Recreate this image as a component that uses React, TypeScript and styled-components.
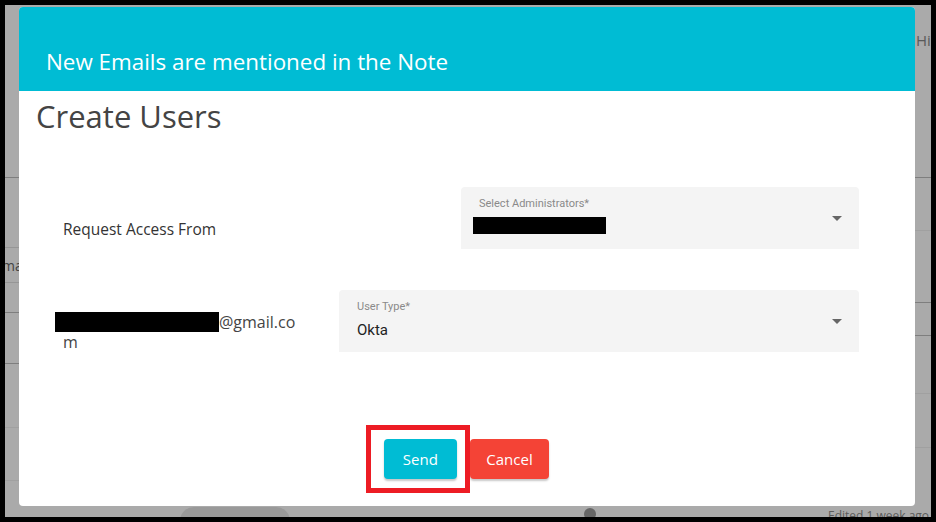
import React from "react";
import styled, { createGlobalStyle } from "styled-components";

const GlobalStyle = createGlobalStyle`
  html, body { margin: 0; padding: 0; background: #000; }
  body {
    width: 936px;
    height: 522px;
    overflow: hidden;
    font-family: "Open Sans", "Liberation Sans", sans-serif;
  }
  * { box-sizing: border-box; }
`;

const Frame = styled.div`
  position: relative;
  width: 936px;
  height: 522px;
  border: 5px solid #000;
  background: #fff;
  overflow: hidden;
`;

/* ---------- page underneath the modal ---------- */
const UnderPage = styled.div`
  display: flex;
  flex-direction: column;
  height: 100%;
`;

const UnderMain = styled.div`
  flex: 1;
  display: flex;
  min-height: 0;
`;

const SidePane = styled.div<{ $width: number }>`
  width: ${(p) => p.$width}px;
  display: flex;
  flex-direction: column;
  overflow: hidden;
`;

const Middle = styled.div`
  flex: 1;
`;

const UnderRow = styled.div<{ $h: number; $line: "dark" | "light" | "faint"; $padLeft?: number }>`
  flex: none;
  height: ${(p) => p.$h}px;
  border-bottom: 1px solid
    ${(p) => (p.$line === "dark" ? "#bdbdbd" : p.$line === "light" ? "#e2e2e2" : "#f0f0f0")};
  display: flex;
  align-items: center;
  padding-left: ${(p) => p.$padLeft ?? 0}px;
  white-space: nowrap;
  font-size: 14px;
  color: #5a5a5a;
`;

const TopRowText = styled.span`
  margin-top: -102px;
  font-size: 15px;
  color: #888;
`;

const ClippedText = styled.span`
  margin-left: -3px;
  font-size: 14px;
  color: #666;
`;

const UnderFooter = styled.div`
  flex: none;
  height: 10px;
  display: flex;
  align-items: flex-start;
  overflow: visible;
  white-space: nowrap;
`;

const Pill = styled.div`
  margin-left: 175px;
  width: 110px;
  height: 28px;
  border-radius: 14px;
  background: #e6e6e6;
  font-size: 12px;
  color: #333;
  padding: 6px 0 0 34px;
`;

const RoundIcon = styled.div`
  margin-left: 294px;
  margin-top: 1px;
  width: 12px;
  height: 12px;
  border-radius: 50%;
  background: #9a9a9a;
`;

const FooterNote = styled.div`
  margin-left: 232px;
  margin-top: 0px;
  font-size: 12px;
  color: #8a8a8a;
`;

/* ---------- modal ---------- */
const Backdrop = styled.div`
  position: absolute;
  inset: 0;
  background: rgba(0, 0, 0, 0.333);
  display: flex;
  padding: 2px 16px 11px 14px;
`;

const Modal = styled.div`
  flex: 1;
  display: flex;
  flex-direction: column;
  background: #fff;
  border-radius: 4px;
  overflow: hidden;
`;

const Header = styled.div`
  flex: none;
  height: 84px;
  background: #00bcd4;
  color: #fff;
  padding: 41px 27px 0;
  font-size: 22.4px;
  line-height: 28px;
`;

const Body = styled.div`
  flex: 1;
  display: flex;
  flex-direction: column;
  padding: 5px 56px 0 17px;
`;

const Title = styled.h2`
  margin: 0;
  font-weight: 400;
  font-size: 31px;
  line-height: 40px;
  color: #444;
`;

const Rows = styled.div`
  display: flex;
  flex-direction: column;
  gap: 41px;
  margin-top: 51px;
  padding-left: 19px;
`;

const FormRow = styled.div<{ $labelCol: number }>`
  display: grid;
  grid-template-columns: ${(p) => p.$labelCol}px 1fr;
  align-items: start;
`;

const RowLabel = styled.div`
  padding: 32px 0 0 8px;
  font-size: 15.5px;
  line-height: 20px;
  color: #333;
`;

const EmailLabel = styled.div`
  padding: 22px 40px 0 8px;
  font-size: 16px;
  line-height: 20px;
  color: #444;
  word-break: break-all;
`;

const Redacted = styled.span<{ $w: number; $h: number; $shift: number }>`
  display: inline-block;
  vertical-align: top;
  width: ${(p) => p.$w}px;
  height: ${(p) => p.$h}px;
  margin-left: -${(p) => p.$shift}px;
  background: #000;
`;

const Field = styled.div`
  height: 62px;
  background: #f4f4f4;
  border-radius: 4px 4px 0 0;
  display: flex;
  align-items: flex-start;
  padding: 10px 17px 0 18px;
  font-family: Roboto, "Liberation Sans", sans-serif;
`;

const FieldContent = styled.div`
  flex: 1;
  display: flex;
  flex-direction: column;
`;

const FieldLabel = styled.div`
  font-size: 11px;
  line-height: 14px;
  color: #8a8a8a;
`;

const FieldValue = styled.div`
  margin-top: 6px;
  font-size: 15px;
  line-height: 20px;
  color: #222;
  display: flex;
  align-items: center;
`;

const Caret = styled.span`
  margin-top: 19px;
  width: 0;
  height: 0;
  border-left: 5px solid transparent;
  border-right: 5px solid transparent;
  border-top: 5px solid #666;
`;

const ButtonRow = styled.div`
  display: flex;
  justify-content: center;
  gap: 13px;
  margin-top: 87px;
  margin-right: -38px;
`;

const Highlighted = styled.span`
  position: relative;
  display: inline-flex;
  &::after {
    content: "";
    position: absolute;
    top: -14px;
    bottom: -14px;
    left: -18px;
    right: -13px;
    border: 5px solid #ed1c24;
    pointer-events: none;
  }
`;

const Button = styled.button<{ $tone: "primary" | "danger" }>`
  height: 40px;
  min-width: 73px;
  padding: 0 16.5px;
  border: none;
  border-radius: 4px;
  font-family: "Open Sans", "Liberation Sans", sans-serif;
  font-size: 15px;
  color: #fff;
  background: ${(p) => (p.$tone === "primary" ? "#00bcd4" : "#f44336")};
  box-shadow: 0 2px 2px rgba(0, 0, 0, 0.22);
  cursor: pointer;
`;

const leftRows: { h: number; line: "dark" | "light" | "faint"; text?: string }[] = [
  { h: 173, line: "dark" },
  { h: 70, line: "light" },
  { h: 35, line: "light", text: "mail" },
  { h: 30, line: "dark" },
  { h: 51, line: "dark" },
  { h: 64, line: "faint" },
  { h: 53, line: "faint" },
];

const rightRows: { h: number; line: "dark" | "light" | "faint"; text?: string }[] = [
  { h: 173, line: "dark", text: "History" },
  { h: 53, line: "faint" },
  { h: 72, line: "dark" },
  { h: 33, line: "dark" },
  { h: 58, line: "faint" },
  { h: 54, line: "faint" },
];

export default function App() {
  return (
    <>
      <GlobalStyle />
      <Frame>
        <UnderPage>
          <UnderMain>
            <SidePane $width={200}>
              {leftRows.map((r, i) => (
                <UnderRow key={i} $h={r.h} $line={r.line}>
                  {r.text && <ClippedText>{r.text}</ClippedText>}
                </UnderRow>
              ))}
            </SidePane>
            <Middle />
            <SidePane $width={200}>
              {rightRows.map((r, i) => (
                <UnderRow key={i} $h={r.h} $line={r.line} $padLeft={185}>
                  {r.text && <TopRowText>{r.text}</TopRowText>}
                </UnderRow>
              ))}
            </SidePane>
          </UnderMain>
          <UnderFooter>
            <Pill>AWS Notes</Pill>
            <RoundIcon />
            <FooterNote>Edited 1 week ago</FooterNote>
          </UnderFooter>
        </UnderPage>

        <Backdrop>
          <Modal>
            <Header>New Emails are mentioned in the Note</Header>
            <Body>
              <Title>Create Users</Title>
              <Rows>
                <FormRow $labelCol={406}>
                  <RowLabel>Request Access From</RowLabel>
                  <Field>
                    <FieldContent>
                      <FieldLabel>Select Administrators*</FieldLabel>
                      <FieldValue>
                        <Redacted $w={133} $h={17} $shift={6} />
                      </FieldValue>
                    </FieldContent>
                    <Caret />
                  </Field>
                </FormRow>
                <FormRow $labelCol={284}>
                  <EmailLabel>
                    <Redacted $w={164} $h={20} $shift={8} />
                    @gmail.com
                  </EmailLabel>
                  <Field>
                    <FieldContent>
                      <FieldLabel>User Type*</FieldLabel>
                      <FieldValue>Okta</FieldValue>
                    </FieldContent>
                    <Caret />
                  </Field>
                </FormRow>
              </Rows>
              <ButtonRow>
                <Highlighted>
                  <Button $tone="primary">Send</Button>
                </Highlighted>
                <Button $tone="danger">Cancel</Button>
              </ButtonRow>
            </Body>
          </Modal>
        </Backdrop>
      </Frame>
    </>
  );
}
